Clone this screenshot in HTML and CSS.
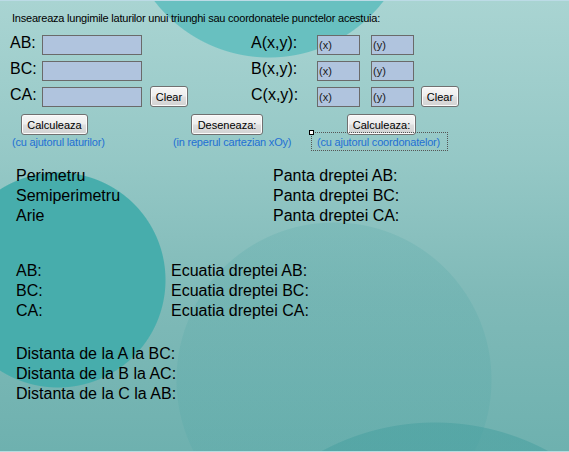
FILE: index.html
```html
<!DOCTYPE html>
<html>
<head>
<meta charset="utf-8">
<link rel="stylesheet" href="styles.css">
</head>
<body>
<div class="form">
  <p class="intro">Inseareaza lungimile laturilor unui triunghi sau coordonatele punctelor acestuia:</p>

  <div class="inputs">
    <span class="lbl">AB:</span><input class="tb" value=""><span></span><span></span><span></span>
    <span class="lbl">A(x,y):</span><input class="tb" value="(x)"><span></span><input class="tb" value="(y)"><span></span><span></span>

    <span class="lbl">BC:</span><input class="tb" value=""><span></span><span></span><span></span>
    <span class="lbl">B(x,y):</span><input class="tb" value="(x)"><span></span><input class="tb" value="(y)"><span></span><span></span>

    <span class="lbl">CA:</span><input class="tb" value=""><span></span><button class="btn clear">Clear</button><span></span>
    <span class="lbl">C(x,y):</span><input class="tb" value="(x)"><span></span><input class="tb" value="(y)"><span></span><button class="btn clear">Clear</button>
  </div>

  <div class="actions">
    <div class="group g1">
      <button class="btn b-calc1">Calculeaza</button>
      <span class="cap cap1">(cu ajutorul laturilor)</span>
    </div>
    <div class="group g2">
      <button class="btn b-draw">Deseneaza:</button>
      <span class="cap cap2">(in reperul cartezian xOy)</span>
    </div>
    <div class="group g3">
      <button class="btn b-calc2">Calculeaza:</button>
      <div class="focusbox"><span class="handle"></span><span class="cap">(cu ajutorul coordonatelor)</span></div>
    </div>
  </div>

  <div class="results r1">
    <span>Perimetru</span><span>Panta dreptei AB:</span>
    <span>Semiperimetru</span><span>Panta dreptei BC:</span>
    <span>Arie</span><span>Panta dreptei CA:</span>
  </div>

  <div class="results r2">
    <span>AB:</span><span>Ecuatia dreptei AB:</span>
    <span>BC:</span><span>Ecuatia dreptei BC:</span>
    <span>CA:</span><span>Ecuatia dreptei CA:</span>
  </div>

  <div class="results r3">
    <span>Distanta de la A la BC:</span>
    <span>Distanta de la B la AC:</span>
    <span>Distanta de la C la AB:</span>
  </div>
</div>
</body>
</html>
```

FILE: styles.css
```css
html, body {
  margin: 0;
  padding: 0;
}

body {
  width: 569px;
  height: 452px;
  overflow: hidden;
  font-family: "Liberation Sans", Arial, sans-serif;
  color: #000;
}

.form {
  box-sizing: border-box;
  width: 569px;
  height: 452px;
  overflow: hidden;
  border-top: 1px solid #bcdbe6;
  border-bottom: 1px solid #b6dce0;
  background:
    radial-gradient(circle 145px at 269px -88px, #68c0c0 144px, rgba(0,0,0,0) 145px),
    radial-gradient(circle 108px at 58px 279px, #47adac 107px, rgba(0,0,0,0) 108px),
    radial-gradient(circle 239px at 435px 660px, rgba(72,160,160,0.55) 238px, rgba(0,0,0,0) 239px),
    radial-gradient(circle 158px at 334px 379px, rgba(78,165,165,0.22) 157px, rgba(0,0,0,0) 158px),
    linear-gradient(180deg, #a9d4d2 0%, #95c8c6 35%, #80bab8 65%, #6eb1af 100%);
}

.intro {
  margin: 11px 0 0 12px;
  font-size: 11px;
  line-height: 13px;
  letter-spacing: -0.22px;
}

.inputs {
  display: grid;
  grid-template-columns: 32px 100px 8px 38px 63px 66px 43px 11px 43px 7px 38px;
  grid-auto-rows: 20px;
  row-gap: 6px;
  padding-left: 10px;
  margin-top: 10px;
}

.lbl {
  font-size: 16px;
  line-height: 16px;
  white-space: nowrap;
}

.tb {
  box-sizing: border-box;
  width: 100%;
  height: 20px;
  margin: 0;
  padding: 0 0 0 1px;
  border: 1px solid #6a6a6a;
  background: #b0c4de;
  font-family: "Liberation Sans", Arial, sans-serif;
  font-size: 11px;
  color: #1a1a1a;
  outline: none;
}

.btn {
  box-sizing: border-box;
  height: 21px;
  margin: 0;
  padding: 0;
  border: 1px solid #707070;
  border-radius: 3px;
  background: linear-gradient(180deg, #f6f6f6 0%, #eeeeee 45%, #dedede 55%, #d3d3d3 100%);
  box-shadow: inset 0 0 0 1px #fbfbfb;
  font-family: "Liberation Sans", Arial, sans-serif;
  font-size: 11px;
  color: #000;
}

.clear {
  width: 38px;
  margin-top: -1px;
}

.actions {
  display: grid;
  grid-template-columns: 170px 138px 1fr;
  align-items: start;
  margin-top: 7px;
  font-size: 11px;
  line-height: 13px;
}

.group {
  display: flex;
  flex-direction: column;
  align-items: flex-start;
}

.b-calc1 { width: 67px; margin-left: 21px; }
.b-draw { width: 72px; margin-left: 21px; }
.b-calc2 { width: 69px; margin-left: 39px; }

.cap {
  font-size: 11px;
  line-height: 13px;
  color: #2370d4;
  white-space: nowrap;
  letter-spacing: -0.2px;
}

.cap1 { margin: 1px 0 0 12px; }
.cap2 { margin: 1px 0 0 3px; }

.focusbox {
  position: relative;
  box-sizing: border-box;
  width: 137px;
  margin: -3px 0 0 3px;
  padding: 3px 0 1px 5px;
  border: 1px dotted #555;
  font-size: 11px;
  line-height: 13px;
}

.handle {
  position: absolute;
  left: -3px;
  top: -3px;
  width: 3px;
  height: 3px;
  border: 1px solid #000;
  background: #fff;
}

.results {
  display: grid;
  grid-auto-rows: 20px;
  padding-left: 16px;
  font-size: 16px;
  line-height: 20px;
  white-space: nowrap;
}

.r1 {
  grid-template-columns: 257px auto;
  margin-top: 15px;
}

.r2 {
  grid-template-columns: 155px auto;
  margin-top: 35px;
}

.r3 {
  grid-template-columns: auto;
  margin-top: 23px;
}
```
